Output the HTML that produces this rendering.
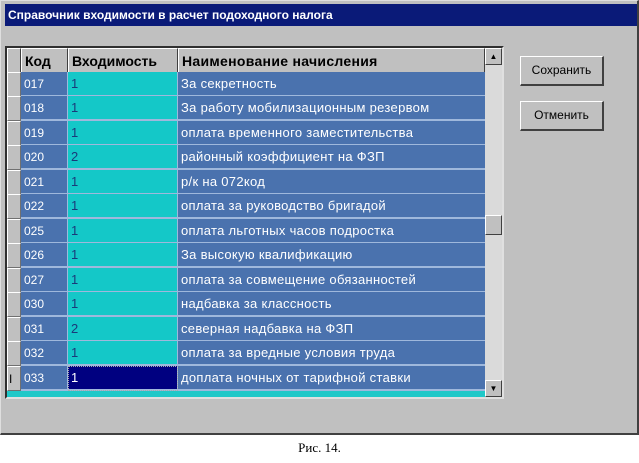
<!DOCTYPE html>
<html><head><meta charset="utf-8"><style>
*{margin:0;padding:0;box-sizing:border-box}
body{width:639px;height:463px;background:#fff;position:relative;overflow:hidden;font-family:"Liberation Sans","DejaVu Sans",sans-serif}
.win{position:absolute;left:0;top:0;width:639px;height:435px;background:#c0c0c0;border-right:2px solid #404040;border-bottom:2px solid #404040;border-left:1px solid #dfdfdf;border-top:1px solid #dfdfdf}
.title{position:absolute;left:4px;top:3px;width:632px;height:22px;background:#0a1a78;color:#fff;font-weight:bold;font-size:12px;line-height:22px;padding-left:3px}
.grid{position:absolute;left:4px;top:45px;width:499px;height:353px;background:#20c8c8;border:2px solid #303030;border-right-color:#e0e0e0;border-bottom-color:#e0e0e0;overflow:hidden}
.row{position:absolute;left:0;height:25px;width:478px}
.c{position:absolute;top:0;height:25px;font-size:13px;line-height:24px;padding-left:3px;border-bottom:2px solid #9fb8dc}
.ind{left:0;width:14px;background:#c0c0c0;border:1px solid #fff;border-right-color:#707070;border-bottom-color:#707070}
.k{left:14px;width:47px;background:#4a72ae;color:#fff;font-size:12px;border-right:1px solid #9fb8dc}
.v{left:61px;width:110px;background:#14c8c8;color:#1a3a7a;border-right:1px solid #9fb8dc}
.n{left:171px;width:307px;background:#4a72ae;color:#fff;letter-spacing:.3px}
.hdr .c{background:#c0c0c0;color:#000;font-weight:bold;font-size:14px;border:1px solid #fff;border-right-color:#404040;border-bottom-color:#404040}
.sb{position:absolute;left:478px;top:0;width:17px;height:349px;background:#e6e6e6;background-image:radial-gradient(#bbb 0.6px,transparent 0.8px);background-size:2px 2px}
.btn2{position:absolute;width:17px;height:17px;background:#c0c0c0;border:1px solid #fff;border-right-color:#404040;border-bottom-color:#404040;font-size:8px;text-align:center;line-height:15px}
.b{position:absolute;left:519px;width:84px;height:30px;background:#c0c0c0;border:1px solid #fff;border-right:2px solid #404040;border-bottom:2px solid #404040;font-size:12px;text-align:center;line-height:27px}
.cap{position:absolute;top:440px;left:0;width:639px;text-align:center;font-family:"Liberation Serif",serif;font-size:13px}
</style></head><body>
<div class="win">
<div class="title">Справочник входимости в расчет подоходного налога</div>
<div class="grid">
<div class="row hdr" style="top:0"><div class="c ind"></div><div class="c k">Код</div><div class="c v">Входимость</div><div class="c n">Наименование начисления</div></div>
<div class="row" style="top:24px"><div class="c ind"></div><div class="c k">017</div><div class="c v">1</div><div class="c n">За секретность</div></div>
<div class="row" style="top:48px"><div class="c ind"></div><div class="c k">018</div><div class="c v">1</div><div class="c n">За работу мобилизационным резервом</div></div>
<div class="row" style="top:73px"><div class="c ind"></div><div class="c k">019</div><div class="c v">1</div><div class="c n">оплата временного заместительства</div></div>
<div class="row" style="top:97px"><div class="c ind"></div><div class="c k">020</div><div class="c v">2</div><div class="c n">районный коэффициент на ФЗП</div></div>
<div class="row" style="top:122px"><div class="c ind"></div><div class="c k">021</div><div class="c v">1</div><div class="c n">р/к на 072код</div></div>
<div class="row" style="top:146px"><div class="c ind"></div><div class="c k">022</div><div class="c v">1</div><div class="c n">оплата за руководство бригадой</div></div>
<div class="row" style="top:171px"><div class="c ind"></div><div class="c k">025</div><div class="c v">1</div><div class="c n">оплата льготных часов подростка</div></div>
<div class="row" style="top:195px"><div class="c ind"></div><div class="c k">026</div><div class="c v">1</div><div class="c n">За высокую квалификацию</div></div>
<div class="row" style="top:220px"><div class="c ind"></div><div class="c k">027</div><div class="c v">1</div><div class="c n">оплата за совмещение обязанностей</div></div>
<div class="row" style="top:244px"><div class="c ind"></div><div class="c k">030</div><div class="c v">1</div><div class="c n">надбавка за классность</div></div>
<div class="row" style="top:269px"><div class="c ind"></div><div class="c k">031</div><div class="c v">2</div><div class="c n">северная надбавка на ФЗП</div></div>
<div class="row" style="top:293px"><div class="c ind"></div><div class="c k">032</div><div class="c v">1</div><div class="c n">оплата за вредные условия труда</div></div>
<div class="row" style="top:318px"><div class="c ind" style="font-size:12px;padding-left:1px;color:#000">I</div><div class="c k">033</div><div class="c v" style="background:#000080;color:#fff;outline:1px dotted #aaa;outline-offset:-1px">1</div><div class="c n">доплата ночных от тарифной ставки</div></div>
<div class="sb">
<div class="btn2" style="top:0;left:0">▲</div>
<div class="btn2" style="top:167px;left:0;height:20px"></div>
<div class="btn2" style="top:332px;left:0">▼</div>
</div>
</div>
<div class="b" style="top:55px">Сохранить</div>
<div class="b" style="top:100px">Отменить</div>
</div>
<div class="cap">Рис. 14.</div>
</body></html>
